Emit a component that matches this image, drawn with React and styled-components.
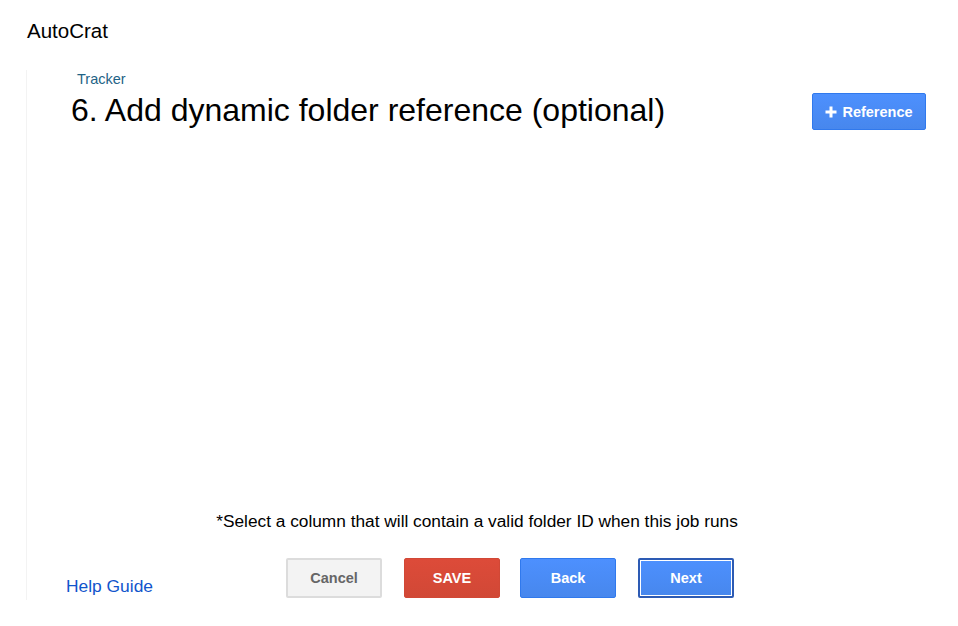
import React from 'react';
import styled, { createGlobalStyle, css } from 'styled-components';

const GlobalStyle = createGlobalStyle`
  body {
    margin: 0;
    background: #fff;
    font-family: Arial, "Liberation Sans", sans-serif;
    color: #000;
  }
`;

const Page = styled.div`
  width: 958px;
  height: 626px;
  overflow: hidden;
`;

const AppTitle = styled.div`
  padding: 19px 0 0 27px;
  height: 70px;
  box-sizing: border-box;
  font-size: 20.5px;
`;

const Panel = styled.div`
  margin-left: 26px;
  width: 900px;
  height: 530px;
  border-left: 1px solid #f3f3f3;
  display: flex;
  flex-direction: column;
`;

const Header = styled.div`
  display: flex;
  justify-content: space-between;
  align-items: flex-start;
  padding-left: 44px;
`;

const TitleBlock = styled.div`
  display: flex;
  flex-direction: column;
`;

const Crumb = styled.div`
  margin: 1px 0 0 6px;
  font-size: 14.5px;
  color: #1f6386;
`;

const Heading = styled.h1`
  margin: 3px 0 0;
  font-size: 32px;
  font-weight: normal;
  line-height: 40px;
`;

const buttonBase = css`
  box-sizing: border-box;
  height: 40px;
  width: 96px;
  border-radius: 2px;
  font-family: Arial, "Liberation Sans", sans-serif;
  font-size: 14.5px;
  font-weight: bold;
  cursor: pointer;
  display: inline-flex;
  align-items: center;
  justify-content: center;
  gap: 5px;
`;

const variants = {
  blue: css`
    background: linear-gradient(#4d90fe, #4787ed);
    border: 1px solid #3079ed;
    color: #fff;
  `,
  red: css`
    background: linear-gradient(#dd4b39, #d14836);
    border: 1px solid #d14836;
    color: #fff;
  `,
  grey: css`
    background: #f3f3f3;
    border: 2px solid #dcdcdc;
    color: #666;
  `,
  focus: css`
    background: linear-gradient(#4d90fe, #4787ed);
    border: 2px solid #2d5bb4;
    box-shadow: inset 0 0 0 1px #fff;
    color: #fff;
  `,
};

const Button = styled.button`
  ${buttonBase}
  ${(p) => variants[p.$variant]}
`;

const RefButton = styled(Button)`
  width: 114px;
  height: 37px;
  margin: 23px 1px 0 0;
`;

const Spacer = styled.div`
  flex: 1;
`;

const Note = styled.div`
  text-align: center;
  font-size: 17.3px;
  margin-bottom: 26px;
`;

const Footer = styled.div`
  display: flex;
  align-items: center;
  padding-left: 39px;
  margin-bottom: 2px;
`;

const HelpLink = styled.a`
  font-size: 17.4px;
  color: #1155cc;
  text-decoration: none;
  margin-top: 16px;
  margin-right: 133px;
`;

const ButtonRow = styled.div`
  display: flex;
  gap: 22px;
  & > :nth-child(3) {
    margin-left: -2px;
  }
`;

const Plus = () => (
  <svg width="12" height="12" viewBox="0 0 12 12">
    <path d="M6 0.5v11M0.5 6h11" stroke="#fff" strokeWidth="3" />
  </svg>
);

export default function App() {
  return (
    <Page>
      <GlobalStyle />
      <AppTitle>AutoCrat</AppTitle>
      <Panel>
        <Header>
          <TitleBlock>
            <Crumb>Tracker</Crumb>
            <Heading>6. Add dynamic folder reference (optional)</Heading>
          </TitleBlock>
          <RefButton $variant="blue">
            <Plus />
            Reference
          </RefButton>
        </Header>
        <Spacer />
        <Note>*Select a column that will contain a valid folder ID when this job runs</Note>
        <Footer>
          <HelpLink href="#">Help Guide</HelpLink>
          <ButtonRow>
            <Button $variant="grey">Cancel</Button>
            <Button $variant="red">SAVE</Button>
            <Button $variant="blue">Back</Button>
            <Button $variant="focus">Next</Button>
          </ButtonRow>
        </Footer>
      </Panel>
    </Page>
  );
}
